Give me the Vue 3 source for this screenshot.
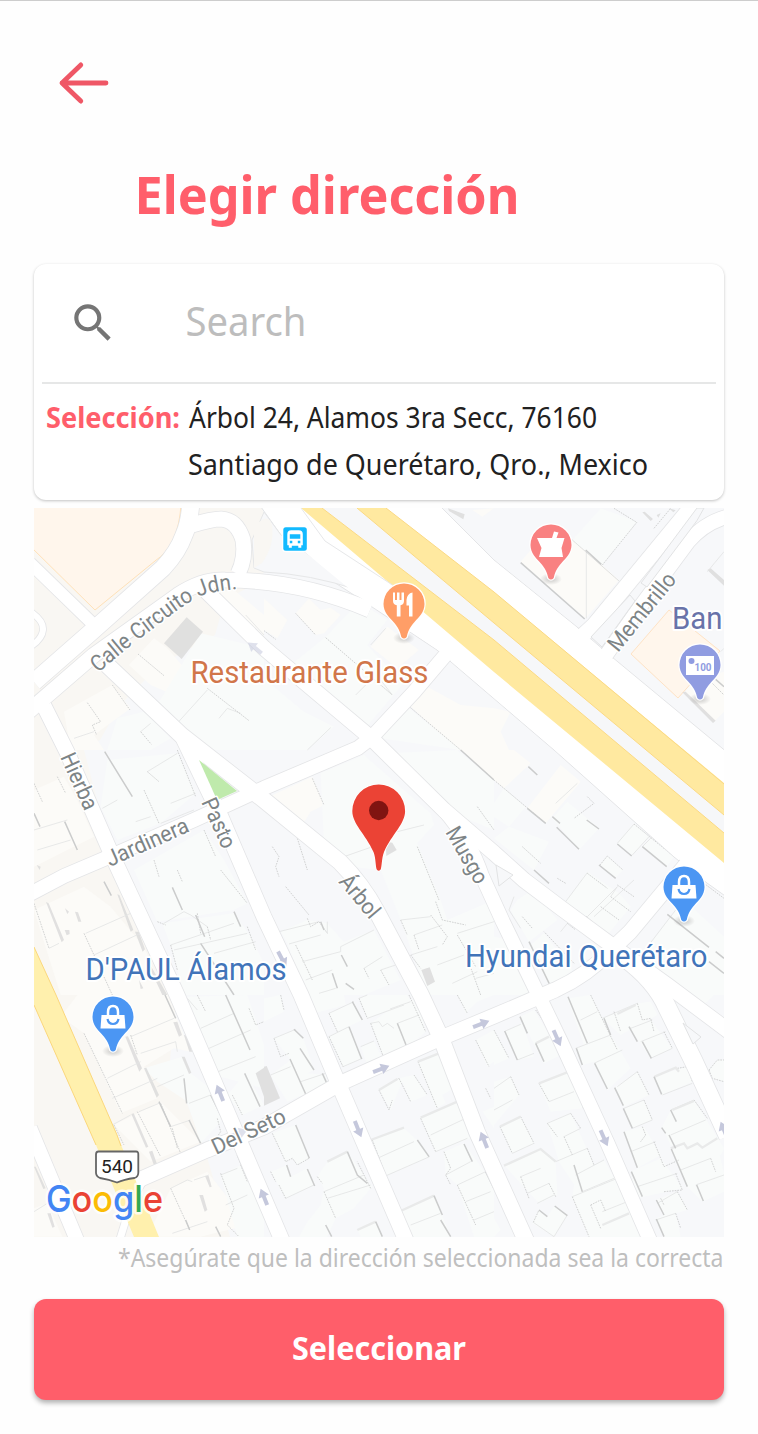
<script setup>
// Street centrelines, with their width in map units
const streets = [
  { d: 'M34 682 L90 633 L163 568 Q178 552 184 535 Q190 522 191 500', w: 17 },
  { d: 'M28 712 L94 655 L178 595 Q202 579 225 580 Q300 580 370 610', w: 15 },
  { d: 'M192 525 Q212 519 221 519 Q237 520 243 540 Q246 558 238 574', w: 15 },
  { d: 'M30 563 L95 626', w: 12 },
  { d: 'M28 610 Q44 620 43 630 Q42 640 28 648', w: 6 },
  { d: 'M44 706 L67 752 L111 853 L177 995 L234 1128 L284 1245', w: 15 },
  { d: 'M104 662 L181 735 L264 800 L340 862 Q362 884 377 912 L421 995 L441 1038 L477 1132 L528 1245', w: 16 },
  { d: 'M183 738 L221 817 L264 917 L301 995 L339 1085 L408 1245', w: 15 },
  { d: 'M28 895 L64 876 L111 856 L194 820 L264 788 L358 748 L371 738 L414 692 L448 652', w: 14 },
  { d: 'M200 585 L264 648 L371 738 L444 810 L494 853 L524 880 L561 908 L614 947 L667 985 L730 1032', w: 15 },
  { d: 'M444 810 Q470 840 482 876 L503 922 L536 990 L561 1042 L607 1142 L652 1245', w: 14 },
  { d: 'M134 1182 L207 1150 L264 1127 L341 1083 L441 1038 L494 1016 L555 990 Q588 975 611 950 L630 932 L690 860', w: 15 },
  { d: 'M625 958 Q655 980 667 1007 L694 1062 L728 1136', w: 18 },
  { d: 'M582 636 L594 625 L627 585 L697 500', w: 15 },
  { d: 'M604 658 L640 607 L688 542 Q705 522 730 516', w: 14 },
  { d: 'M30 1128 L79 1245', w: 14 },
  { d: 'M120 1239 L132 1200 L146 1176', w: 7 }
]

// Building blocks and wall shadows; each tile is drawn at three units per map unit
const tiles = [
  {
    x: 34, y: 505,
    warm: 'M285 480 L360 400 L400 430 L460 500 L420 570 L350 540Z M510 270 L600 255 L690 330 L690 400Z M90 620 L235 540 L290 610 L180 690 L210 735 L110 735Z',
    cool: 'M500 385 L690 430 L690 735 L520 735 L370 600Z M250 640 L330 620 L410 700 L350 735 L220 735Z',
    solid: 'M458 337 L507 380 L443 462 L390 415Z',
    lines: 'M520 555 L425 660 M555 640 L580 610 L620 625 M320 680 L350 655 M120 700 L180 680 M690 390 L635 330',
    dots: 'M510 270 L690 430 M312 447 L390 512 M520 550 L645 647 M235 540 L288 615 M160 593 L200 650 L175 660 L188 690 M320 680 L352 718'
  },
  {
    x: 264, y: 505,
    warm: 'M0 280 L70 345 L40 400 L0 375Z M95 325 L135 280 L170 315 L200 308 L230 330 L180 385 L155 390Z M370 365 L465 435 L400 490 L320 425Z M435 600 L490 545 L590 600 L690 610 L690 735 L580 735Z M625 15 L690 10 L655 35Z',
    cool: 'M80 480 L185 395 L285 290 L370 345 L310 420 L385 500 L440 510 L300 675 L180 575Z M0 520 L120 620 L210 665 L130 735 L0 735Z M350 700 L430 605 L590 735Z',
    solid: 'M552 10 L602 28 L598 43 L555 18Z',
    lines: 'M275 570 L320 525 M350 525 L385 570 M320 420 L365 370 M200 668 L130 735',
    dots: 'M95 325 L155 390 M185 398 L385 570 M180 575 L300 675 M430 600 L590 735 M0 377 L35 403'
  },
  {
    x: 494, y: 505,
    warm: 'M80 170 L115 130 L240 105 L375 225 L275 340Z M0 610 L50 620 L20 680 L45 735 L0 735Z M570 565 L600 525 L690 500 L690 620 L660 650Z',
    cool: 'M235 105 L320 10 L430 50 L325 180Z',
    solid: 'M640 195 L650 190 L690 225 L690 242Z M565 562 L575 560 L665 647 L657 654Z M445 22 L452 20 L477 42 L470 48Z M488 30 L500 25 L493 38Z M525 10 L545 16 L538 22Z',
    lines: 'M277 140 L277 340 M640 200 L690 140 M680 440 L690 430',
    dots: 'M235 105 L375 228 M360 10 L428 52 M325 180 L430 50 M480 70 L530 10 M650 530 L690 570',
    walls: 'M80 173 L272 342 M275 135 L322 178 M665 523 L690 545'
  },
  {
    x: 34, y: 750,
    warm: 'M0 120 L90 80 L130 150 L180 260 L100 300 L0 350Z M0 480 L150 410 L230 470 L330 590 L390 735 L80 735Z',
    cool: 'M220 30 L430 10 L485 130 L380 220 L250 270 L200 170Z M300 360 L510 240 L570 330 L640 460 L600 480 L370 515Z M385 520 L600 490 L650 560 L690 640 L690 735 L450 735 L415 600Z',
    lines: 'M205 175 L250 150 M340 65 L430 10 M410 160 L485 130 M380 220 L480 180 M305 215 L350 200 M390 520 L450 485 L470 495 L520 530 M410 585 L600 520 M45 595 L75 580 M155 550 L290 490 M180 615 L330 545 M420 600 L640 550 M540 610 L665 575 M0 240 L100 210 M10 300 L110 270',
    dots: 'M70 80 L95 130 M0 100 L25 155 M340 65 L375 95 M330 120 L375 220 M430 0 L485 140 M150 550 L235 735 M0 460 L45 595 M360 330 L375 380 M430 360 L445 395 M560 360 L640 460 M370 515 L395 525 M520 530 L530 570 M410 585 L430 660 M490 490 L500 550 M640 530 L665 600 M510 240 L545 320',
    walls: 'M212 5 L295 140 M92 215 L130 300 M210 395 L232 437 M415 412 L445 480 M485 495 L512 560 M600 485 L620 530 M0 190 L18 230 M500 580 L600 735',
    solid: 'M250 433 L256 435 L298 540 L290 545Z M303 545 L314 545 L333 598 L326 605Z M345 650 L352 650 L400 735 L385 735Z M36 456 L44 460 L90 570 L83 577Z M93 475 L105 485 L100 492Z M123 485 L132 487 L142 515 L133 515Z M92 540 L106 540 L107 552 L98 556Z M315 690 L328 715 L320 717Z M8 345 L20 350 L17 360Z'
  },
  {
    x: 264, y: 750,
    warm: 'M15 140 L145 80 L180 165 L140 185 L115 225Z M590 0 L690 0 L690 90Z',
    cool: 'M170 70 L300 15 L500 190 L510 225 L460 280 L530 450 L550 510 L690 450 L690 735 L490 735 L410 510 L350 360 L260 350 L180 280Z M50 545 L130 510 L190 520 L240 575 L330 540 L410 690 L300 735 L125 735 L70 580Z M370 10 L580 0 L690 90 L690 240 L520 170Z',
    solid: 'M365 275 L385 278 L398 300 L367 318Z M472 660 L497 652 L513 695 L490 708Z',
    lines: 'M400 245 L480 225 M240 320 L340 285 M45 545 L165 515 M75 582 L170 555 M115 635 L230 605 L230 590 L330 540 M125 690 L205 660 M300 655 L355 620 M350 660 L395 645 M165 730 L215 715 M410 510 L500 500 M450 555 L535 525 M580 550 L690 515 M440 615 L520 590 M520 645 L600 615 M635 685 L690 670 M190 550 L190 515 M565 700 L640 665',
    dots: 'M145 85 L180 165 M100 265 L130 360 M25 290 L45 320 L35 350 L45 380 M65 410 L135 495 M460 290 L525 450 M410 510 L430 555 M450 555 L465 600 M500 495 L550 560 L535 585 M130 505 L140 530 L165 515 L190 550 M95 585 L145 690 M300 655 L315 685 M350 660 L375 705 M610 625 L650 735 M580 555 L635 650 M440 615 L470 655 M640 170 L690 240 M515 455 L535 510 L605 525',
    walls: 'M170 515 L180 540 M232 615 L250 650 M205 670 L220 715 M365 0 L380 10 M590 0 L690 90 M450 75 L482 105 M245 700 L270 718'
  },
  {
    x: 494, y: 750,
    warm: 'M0 0 L60 0 L110 40 L30 115 L0 90Z M200 45 L260 95 L155 220 L100 175Z',
    cool: 'M30 115 L95 170 L45 230 L0 200 L0 160Z M45 230 L165 275 L120 360 L0 265Z M175 205 L220 155 L315 235 L255 300Z M370 280 L420 220 L465 260 L415 315Z M445 290 L475 260 L540 320 L518 350Z M318 345 L340 318 L387 360 L363 385Z M215 455 L280 365 L375 430 L410 470 L340 555Z M430 630 L570 450 L690 560 L690 735 L560 735Z M0 560 L50 570 L110 735 L0 735Z M105 590 L150 550 L235 660 L170 715Z M70 450 L115 420 L190 510 L105 575 L50 480Z',
    lines: 'M60 440 L45 480 L80 535 M200 545 L220 520 M185 160 L250 100 M280 500 L370 410 M350 440 L370 410 M370 280 L420 222 M415 315 L465 260 M445 290 L475 260 M420 390 L300 500 M545 480 L430 630 M215 455 L280 368',
    dots: 'M0 90 L155 220 M420 222 L543 322 M318 345 L340 318 L387 360 M190 385 L215 400 M85 290 L140 340 M280 140 L300 160 L240 205 M370 405 L420 440 M350 440 L410 485 M320 470 L375 510 M220 520 L245 540 M85 500 L115 535 M280 370 L340 415 M630 400 L690 445 M0 500 L110 730 M240 640 L150 545',
    walls: 'M370 282 L413 318 M445 290 L518 350 M315 345 L365 385 M275 500 L340 556 M175 200 L198 220 M188 232 L255 298 M520 493 L645 592 M120 360 L165 400 M100 175 L155 220 M103 50 L130 75 M430 635 L520 685 M645 635 L690 670 M665 605 L690 625 M105 575 L170 710 M278 210 L315 237 M530 715 L553 735'
  },
  {
    x: 34, y: 995,
    warm: 'M80 65 L130 0 L400 0 L470 170 L420 160 L330 215 L370 310 L260 355 L150 115Z M410 580 L520 530 L575 600 L640 690 L500 725 L340 725Z M240 390 L380 320 L500 440 L350 500Z M0 640 L40 625 L85 725 L0 725Z',
    cool: 'M370 260 L330 220 L445 185 L470 235 L555 300 L560 380 L500 445 L460 320Z M460 5 L640 0 L690 150 L690 280 L540 240Z M580 300 L635 235 L690 330 L625 360Z M560 540 L620 510 L690 640 L690 725 L610 725Z',
    solid: 'M665 235 L690 218 L690 305Z M274 125 L282 124 L324 220 L316 230Z M330 220 L337 218 L375 300 L368 308Z M292 357 L299 355 L343 455 L336 458Z M418 82 L430 80 L444 120 L435 125Z M345 470 L355 467 L370 510 L362 516Z M496 600 L507 600 L520 645 L512 650Z M513 543 L524 543 L533 575 L527 577Z M40 655 L50 655 L62 695 L55 698Z M0 515 L5 515 L35 580 L28 582Z M450 120 L458 122 L475 170 L466 170Z M443 185 L452 185 L472 233 L465 237Z',
    lines: 'M290 125 L420 70 M220 250 L320 200 M235 310 L370 250 M235 390 L290 360 M315 350 L375 325 M410 395 L470 375 M370 275 L450 240 M465 325 L530 300 M320 175 L425 140 L430 170 M500 100 L600 55 M525 160 L650 105 M540 235 L665 185 M490 45 L460 10 M410 580 L460 555 L475 560 M480 555 L525 540 M560 540 L610 520 M575 630 L640 600 M415 715 L520 680 M0 650 L40 625 M540 480 L620 440',
    dots: 'M150 115 L265 355 M310 350 L380 485 M380 325 L440 475 M290 120 L310 180 M490 0 L515 50 M645 40 L665 90 L690 80 M560 535 L600 640 L580 690 L615 725 M410 580 L465 700 M540 440 L560 410 L550 370 M240 390 L270 450 M595 300 L625 360 M620 510 L640 560 M415 400 L430 460',
    walls: 'M393 0 L425 70 M375 320 L410 395 M465 375 L500 445 M450 250 L458 325 M530 300 L565 370 M575 0 L648 165 M632 235 L678 335 M610 480 L640 550 M455 675 L467 705 M545 695 L560 725'
  },
  {
    x: 264, y: 995,
    warm: '',
    cool: 'M0 10 L50 0 L60 50 L0 80Z M135 0 L240 0 L245 30 L150 55Z M195 55 L270 20 L295 75 L220 110Z M285 10 L310 0 L430 0 L440 20 L310 70Z M378 42 L460 10 L485 110 L430 160 L360 190 L320 85Z M195 125 L255 95 L295 190 L237 215Z M290 155 L330 138 L355 190 L310 210Z M30 130 L95 103 L118 130 L150 225 L130 235 L185 240 L190 268 L70 320 L20 240 L80 195Z M462 200 L525 175 L570 280 L535 300 L545 325 L517 340Z M345 285 L405 250 L450 240 L490 300 L440 320 L415 260 L380 345Z M470 370 L580 320 L630 425 L515 470Z M320 435 L420 400 L465 440 L497 485 L360 545Z M25 415 L95 390 L135 490 L100 510 L85 490 L65 500Z M20 530 L70 510 L80 545 L130 520 L150 570 L65 610Z M160 545 L190 500 L250 470 L325 575 L270 640 L215 670 L190 725 L105 725 L130 680 L170 630 L180 580Z M410 650 L510 600 L560 725 L445 725Z M540 470 L600 445 L690 570 L690 725 L630 725 L580 570 L545 540Z M635 135 L690 105 L690 200 L670 215Z M280 705 L335 680 L355 725 L290 725Z M580 0 L690 0 L640 20 L605 55Z M655 350 L690 335 L690 400Z',
    solid: 'M0 215 L8 213 L48 310 L0 332Z',
    lines: 'M30 130 L95 103 M20 240 L80 215 M110 260 L185 235 M195 55 L270 20 M195 125 L255 95 M285 10 L310 0 M310 70 L420 30 M378 42 L440 20 M400 85 L465 60 M320 85 L345 80 L355 95 L370 85 L390 100 M290 155 L330 138 M345 285 L405 250 M500 420 L605 370 M340 490 L450 440 M180 590 L300 540 M190 610 L320 570 M580 570 L665 530 M605 620 L680 590 M630 675 L690 650 M440 690 L530 655 M545 540 L620 500 M65 610 L150 570 M515 470 L610 430 M360 545 L497 485 M237 215 L295 190',
    dots: 'M30 130 L50 185 L75 175 M50 0 L60 45 M135 0 L155 55 M195 125 L237 215 M285 10 L310 70 M345 285 L375 345 L385 315 M405 250 L440 320 M450 240 L490 300 M462 200 L520 340 M525 175 L570 280 M470 370 L515 470 M410 650 L445 725 M635 135 L675 215 M580 570 L635 690 M540 470 L560 520 L545 540 L560 570 M580 0 L610 55 M320 85 L360 190 M195 55 L220 110 M25 415 L65 500 L85 490 L100 510 L135 490 M20 530 L35 560 M45 570 L65 610 M160 545 L175 565 M180 590 L215 670 M435 0 L485 110 M665 280 L680 310 M325 435 L365 540 M320 580 L280 500',
    walls: 'M255 95 L293 192 M78 192 L125 297 M95 390 L136 490 M130 522 L152 573 M68 510 L80 545 M250 470 L280 540 L310 565 M400 85 L430 160 M265 20 L295 75 M90 103 L118 130 M108 160 L150 225 M510 602 L535 660 M580 322 L605 375 M460 435 L495 485 M600 447 L625 500 M185 690 L203 725 M335 680 L355 725 M530 675 L560 725 M175 235 L190 268 M665 530 L690 580',
    roofs: 'M320 435 L420 398 M470 368 L580 320 M410 648 L510 602 M190 500 L250 470 M462 200 L525 175 M280 705 L335 680 M345 285 L400 252'
  },
  {
    x: 494, y: 995,
    warm: '',
    cool: 'M220 10 L290 0 L350 120 L270 150Z M325 70 L430 25 L470 20 L490 60 L380 120Z M245 160 L350 120 L410 220 L340 285 L300 200 L265 210Z M360 280 L430 230 L465 300 L390 335Z M405 95 L470 75 L535 160 L470 190Z M480 245 L580 215 L595 260 L505 300Z M388 340 L450 315 L475 375 L415 400Z M390 410 L450 395 L500 480 L430 520Z M530 345 L600 315 L690 460 L680 480 L530 450 L505 395Z M530 460 L665 430 L690 535 L690 590 L625 620 L580 575Z M410 530 L500 490 L565 580 L430 610Z M485 615 L550 590 L580 645 L510 665Z M485 670 L545 650 L560 725 L510 725Z M32 110 L85 85 L120 185 L70 195Z M78 65 L120 45 L160 110 L200 180 L150 205Z M135 265 L230 230 L265 340 L170 350Z M160 385 L230 355 L300 510 L255 590 L195 500Z M0 260 L50 245 L75 300 L0 390Z M18 395 L80 365 L120 445 L55 475Z M30 510 L140 460 L185 500 L190 600 L135 625Z M245 540 L330 495 L400 620 L440 725 L285 725 L235 605Z M115 685 L135 645 L160 665 L180 635 L220 660 L180 725Z M0 105 L45 190 L0 210Z M645 225 L670 195 L690 195 L690 260 L655 250Z M540 0 L660 0 L610 48Z M0 670 L20 705 L0 725Z',
    lines: 'M260 75 L310 50 M325 70 L430 25 M245 160 L350 120 M300 205 L385 165 M370 275 L430 230 M440 140 L515 110 M410 100 L475 75 M390 340 L450 315 M530 345 L600 315 M410 470 L485 440 M430 575 L550 535 M490 625 L550 590 M485 675 L545 655 M165 320 L240 290 M160 385 L230 355 M210 425 L260 400 M185 500 L280 460 M245 540 L330 495 M80 545 L140 520 M100 595 L165 565 M530 420 L635 375 M560 525 L650 490 M605 570 L690 540 M0 280 L50 245 M0 345 L55 315 M325 650 L400 620 M235 605 L370 550 M130 625 L180 600 M265 590 L360 550 M505 300 L595 265 M470 190 L535 160 M415 400 L475 375 M55 475 L120 445 M70 195 L120 175 M118 682 L180 725 L220 660 M34 108 L80 88',
    dots: 'M290 0 L370 165 M360 50 L380 110 M430 25 L445 75 L470 70 L480 110 M510 110 L535 160 M550 220 L580 215 L595 260 M430 230 L465 300 M450 315 L475 375 M445 395 L455 420 L440 440 M480 440 L510 515 L555 495 M545 535 L565 585 L510 590 M500 610 L510 630 M550 590 L580 645 M545 655 L560 700 M135 265 L165 320 M220 230 L250 290 M210 425 L235 480 M230 355 L260 400 M160 385 L190 425 M280 460 L300 510 M340 495 L400 620 M235 605 L285 725 M0 105 L45 190 M50 245 L75 300 M80 365 L120 445 M18 395 L55 475 M80 545 L105 610 M165 565 L185 605 M645 225 L670 195 L690 195 M645 225 L655 250 L690 260 M290 630 L320 615 L335 650 M125 45 L170 110 M600 315 L640 370 M650 490 L665 530 M235 230 L268 340 M320 700 L290 630 M118 682 L135 645',
    walls: 'M222 5 L280 145 M247 160 L265 210 M32 108 L70 195 M78 65 L100 115 M125 145 L150 200 M302 205 L340 282 M362 278 L388 332 M405 95 L430 140 M445 140 L472 190 M480 245 L503 298 M388 340 L415 400 M390 410 L430 518 M530 345 L547 380 M503 398 L515 415 M525 420 L545 460 M532 462 L580 575 M608 570 L628 618 M412 530 L445 605 M487 615 L510 660 M487 672 L510 725 M330 70 L350 120 M550 0 L612 48 M665 280 L690 345 M240 510 L265 590 M135 645 L160 665 M182 633 L220 662',
    roofs: 'M135 265 L225 230 M30 512 L140 462 L185 500 M325 690 L405 655 M530 460 L570 445 L580 460 L610 445 L625 458 L670 430 M18 395 L80 365 M370 57 L425 30 M535 345 L600 318 M125 145 L165 125 M482 245 L545 218 L555 230'
  }
]

const arrows = [
  [381, 1069, -21], [481, 1024, -21], [358, 1129, 68], [484, 1140, -112], [557, 1038, 66],
  [604, 1138, 66], [220, 1093, -112], [264, 1197, -112], [282, 959, 62], [255, 648, -142],
  [724, 1130, -112], [239, 1133, -20]
]

const streetNames = [
  { t: 'Hierba', x: 60, y: 757, a: 65.5, l: 60 },
  { t: 'Pasto', x: 201, y: 802, a: 65.5, l: 53 },
  { t: 'Jardinera', x: 110, y: 867, a: -24, l: 88 },
  { t: 'Árbol', x: 338, y: 882, a: 50, l: 50 },
  { t: 'Musgo', x: 445, y: 832, a: 60, l: 62 },
  { t: 'Membrillo', x: 618, y: 653, a: -51, l: 94 },
  { t: 'Del Seto', x: 216, y: 1155, a: -25, l: 79 }
]

const pins = [
  { x: 404, y: 604, c: '#ff9e67', kind: 'food' },
  { x: 551, y: 545, c: '#f98181', kind: 'pharmacy' },
  { x: 700, y: 665, c: '#909ce1', kind: 'money' },
  { x: 684, y: 887, c: '#4b96f3', kind: 'bag' },
  { x: 113, y: 1017, c: '#4b96f3', kind: 'bag' }
]
</script>

<template>
  <main class="screen">
    <button class="back" aria-label="Regresar">
      <svg width="52" height="44" viewBox="0 0 52 44">
        <path d="M22.800 3.900 L4 22 L22.800 40.100 M4 22 H48" />
      </svg>
    </button>

    <h1 class="title">
      <svg width="400" height="70"><text x="-1.500" y="50" textLength="385" lengthAdjust="spacingAndGlyphs">Elegir dirección</text></svg>
    </h1>

    <section class="card">
      <div class="search">
        <svg class="glass" width="50" height="50" viewBox="0 0 24 24">
          <path d="M15.500 14h-.790l-.280-.270A6.470 6.470 0 0 0 16 9.500A6.500 6.500 0 1 0 9.500 16c1.610 0 3.090-.590 4.230-1.570l.270.280v.790l5 4.990L20.490 19l-4.990-5zm-6 0C7.010 14 5 11.990 5 9.500S7.010 5 9.500 5 14 7.010 14 9.500 11.990 14 9.500 14z" />
        </svg>
        <svg class="placeholder" width="130" height="56"><text x="-.500" y="41" textLength="121" lengthAdjust="spacingAndGlyphs">Search</text></svg>
      </div>
      <div class="selection">
        <svg class="caption" width="143" height="94"><text x="0" y="36" textLength="134" lengthAdjust="spacingAndGlyphs">Selección:</text></svg>
        <svg class="address" width="480" height="94">
          <text x="0" y="36" textLength="408" lengthAdjust="spacingAndGlyphs">Árbol 24, Alamos 3ra Secc, 76160</text>
          <text x="-1" y="83" textLength="460" lengthAdjust="spacingAndGlyphs">Santiago de Querétaro, Qro., Mexico</text>
        </svg>
      </div>
    </section>

    <svg class="map" width="690" height="729" viewBox="34 508 690 729">
      <defs>
        <path id="circuito" d="M98 673 L134 643 L167 618 Q188 602 201 596 Q215 590 250 588" />
        <path id="pin" d="M-20.500 0 A20.500 20.500 0 1 1 20.500 0 C20.500 8 15 13 10.500 18 C5.500 24 4 27 2.700 33 Q0 36 -2.700 33 C-4 27 -5.500 24 -10.500 18 C-15 13 -20.500 8 -20.500 0Z" />
        <radialGradient id="shade"><stop offset="0" stop-color="#777" stop-opacity=".4" /><stop offset="1" stop-color="#777" stop-opacity="0" /></radialGradient>
      </defs>
      <rect x="34" y="508" width="690" height="729" fill="#f7f8fa" />
      <path fill="#f9f7f3" d="M34 508H262L272 535L262 580L225 600L215 635L160 665L120 705L100 740L84 750L111 853L140 920L175 1010L170 1060L205 1150L230 1237H34Z" />
      <path d="M30 504H181Q179 545 155 561L95 610L30 546Z" fill="#fff6ec" stroke="#ffe1b8" />
      <path d="M669 610L720 651L678 698L631 654Z" fill="#fff6ec" stroke="#ffe3c5" />

      <g v-for="t in tiles" :key="t.x + '-' + t.y" :transform="`translate(${t.x} ${t.y}) scale(.33333)`">
        <path :d="t.warm" fill="#fcfbf8" />
        <path :d="t.cool" class="block" />
        <path v-if="t.solid" :d="t.solid" fill="#d9d9d9" opacity=".8" />
        <path :d="t.lines" class="edge" />
        <path :d="t.dots" class="dots" />
        <path v-if="t.roofs" :d="t.roofs" class="roof" />
        <path v-if="t.walls" :d="t.walls" class="wall" />
      </g>

      <path d="M256 500H434L494 560L577 627L612 657L728 753V898L707 883L674 857L554 750L437 650L357 597L300 560L281 535Z" fill="#fff" stroke="#e4e5e7" />
      <path d="M264 512L281 535L358 590Q310 574 264 572L254 568L252 540Z" fill="#f7f8fa" stroke="#e6e7e8" />
      <path d="M254 527Q268 511 272 525Q275 545 262 563L254 568Z" fill="#f9f7f3" />
      <g fill="none" stroke="#e4e5e7">
        <path v-for="(s, i) in streets" :key="i" :d="s.d" :stroke-width="s.w + 1.6" />
      </g>
      <g fill="none" stroke="#fff" stroke-linejoin="round">
        <path v-for="(s, i) in streets" :key="i" :d="s.d" :stroke-width="s.w" />
      </g>
      <path d="M260 500H426L434 509L493 560L576 627L612 658L724 751V894L708 882L675 856L555 750L438 650L358 596L300 548L282 534Z" fill="#fff" />
      <path d="M322 508H357L494 623L724 815V833L494 640Z" fill="#f6f7f9" />
      <path d="M301 508H322L494 640L724 833V863L494 672Z M357 508H386L494 592L724 783V815L494 623Z" fill="#ffe9a0" />
      <path d="M322 508L494 640L724 833M357 508L494 623L724 815M386 508L494 592L724 784" fill="none" stroke="#fbd984" />
      <path d="M301 508L325 541L394 586" fill="none" stroke="#e6e7e9" />
      <path d="M591 637L630 595L635 601L602 647Z M641 583L697 508H704Q697 522 690 530L647 587Z" fill="#f7f8fa" stroke="#e2e3e4" />
      <path d="M34 947L56 995L117 1135L159 1237H134L96 1145L34 1005Z" fill="#fff0ad" />
      <path d="M34 947L56 995L117 1135L121 1146M34 1005L96 1145" fill="none" stroke="#fbd77c" />
      <path d="M199 760L237 791L217 800Z" fill="#bfeaac" />
      <path d="M683 1023L701 1037L693 1044Z" fill="#f7f8fa" stroke="#e2e3e4" />
      <path d="M496 865L513 875L499 886Z" fill="#f7f8fa" stroke="#e2e3e4" />

      <path
        v-for="(a, i) in arrows" :key="'a' + i"
        :transform="`translate(${a[0]} ${a[1]}) rotate(${a[2]})`"
        d="M-8.500 -2H0.500V-5.500L9 0L0.500 5.500V2H-8.500Z" fill="#c5c8dc" :opacity="i === 9 || i === 11 ? .55 : 1"
      />

      <g class="street">
        <text
          v-for="s in streetNames" :key="s.t" :textLength="s.l" lengthAdjust="spacingAndGlyphs"
          :transform="`translate(${s.x} ${s.y}) rotate(${s.a})`"
        >{{ s.t }}</text>
        <text><textPath href="#circuito" textLength="166" lengthAdjust="spacingAndGlyphs">Calle Circuito Jdn.</textPath></text>
      </g>

      <g class="place">
        <text x="190.500" y="683" textLength="238" lengthAdjust="spacingAndGlyphs" fill="#d1764a">Restaurante Glass</text>
        <text x="672" y="629" textLength="50.500" lengthAdjust="spacingAndGlyphs" fill="#6973a9">Ban</text>
        <text x="85.500" y="980" textLength="201" lengthAdjust="spacingAndGlyphs" fill="#4174b9">D'PAUL Álamos</text>
        <text x="465" y="966.500" textLength="242.500" lengthAdjust="spacingAndGlyphs" fill="#4174b9">Hyundai Querétaro</text>
      </g>

      <g transform="translate(283.300 527.300)">
        <rect x="-1.500" y="-1.500" width="26.500" height="26.500" rx="4" fill="#fff" />
        <rect width="23.500" height="23.500" rx="2.500" fill="#12baff" />
        <path d="M4 7Q4 3 8 3H15.500Q19.500 3 19.500 7V18H18V20.500H15V18.500H8.500V20.500H5.500V18H4Z" fill="#fff" />
        <path d="M6.500 7H17V11.500H6.500Z M6.500 13.500H9V16H6.500Z M14.500 13.500H17V16H14.500Z" fill="#12baff" />
      </g>

      <g v-for="p in pins" :key="p.x" :transform="`translate(${p.x} ${p.y})`">
        <ellipse cx="0" cy="34" rx="11" ry="6" fill="url(#shade)" />
        <use href="#pin" fill="#fff" stroke="#fff" stroke-width="2.500" />
        <use href="#pin" :fill="p.c" />
        <g v-if="p.kind === 'food'" fill="#fff">
          <path d="M-11 -11.500H-9V-4H-7V-11.500H-4.500V-4H-2.500V-11.500H0V-3Q-.200 .800 -3.500 1.200V12.500H-7.200V1.200Q-10.800 .800 -11 -3Z M8.500 -11.500V12.500H5V1.500H2.500V-4Q3 -10.500 8.500 -11.500Z" />
        </g>
        <g v-else-if="p.kind === 'pharmacy'" fill="#fff">
          <path d="M-14 -7H1L3 -13.500L7.500 -12.500L5.500 -7H13.500L10.500 3L12 12H-12L-9.500 3Z" />
        </g>
        <g v-else-if="p.kind === 'money'">
          <rect x="-14" y="-9" width="28" height="19" fill="#fff" />
          <circle cx="-8.500" cy="-4" r="3" fill="#909ce1" />
          <text x="-5.500" y="6" textLength="17" lengthAdjust="spacingAndGlyphs" class="hundred">100</text>
        </g>
        <g v-else>
          <path d="M-11.500 -2H11.500L12.500 11.500H-12.500Z" fill="#fff" />
          <path d="M-5 -2V-5Q-5 -11 0 -11Q5 -11 5 -5V-2" fill="none" stroke="#fff" stroke-width="2.500" />
          <path d="M-5.500 2Q-4.500 7 0 7Q4.500 7 5.500 2" fill="none" stroke="#4b96f3" stroke-width="2.200" />
        </g>
      </g>

      <path d="M352.300 811A26.400 26.400 0 0 1 405.100 811C405.100 824 392 834 384 852C381.500 858 382 868 380.300 870Q378.700 871.300 377.100 870C375.400 868 376 858 373.500 852C365.500 834 352.300 824 352.300 811Z" fill="#eb4335" stroke="#fff" stroke-width="1.500" paint-order="stroke" />
      <circle cx="378.700" cy="810.500" r="9.700" fill="#801411" />

      <path d="M98.500 1151.500H136Q138.500 1151.500 138.300 1154.500V1173Q138 1177 134.500 1178Q124 1179.500 117 1182.500Q109 1179.500 100 1178Q96.300 1176.500 96 1173V1154.500Q96 1151.500 98.500 1151.500Z" fill="#fff" stroke="#666" stroke-width="1.800" />
      <text x="101" y="1172.500" textLength="32" lengthAdjust="spacingAndGlyphs" class="route">540</text>
      <text x="46" y="1211.500" textLength="117" lengthAdjust="spacingAndGlyphs" class="brand"><tspan fill="#4285f4">G</tspan><tspan fill="#ea4335">o</tspan><tspan fill="#fbbc05">o</tspan><tspan fill="#4285f4">g</tspan><tspan fill="#34a853">l</tspan><tspan fill="#ea4335">e</tspan></text>
    </svg>

    <p class="note">
      <svg width="607" height="44"><text x="1" y="30" textLength="605.500" lengthAdjust="spacingAndGlyphs">*Asegúrate que la dirección seleccionada sea la correcta</text></svg>
    </p>
    <button class="submit">
      <svg width="178" height="60"><text x="2" y="39.500" textLength="174" lengthAdjust="spacingAndGlyphs">Seleccionar</text></svg>
    </button>
  </main>
</template>

<style>
body { background: #fefefe; }
</style>

<style scoped>
.screen {
  box-sizing: border-box;
  width: 758px;
  height: 1434px;
  padding: 60px 34px 0;
  border-top: 1px solid #cdcdcd;
  background: #fefefe;
  font-family: "Noto Sans", "Open Sans", sans-serif;
  overflow: hidden;
}
svg { display: block; flex: none; }
button { border: 0; padding: 0; background: none; font: inherit; }
.back { display: block; margin-left: 24px; }
.back path { fill: none; stroke: #ef5766; stroke-width: 4.8; stroke-linecap: round; stroke-linejoin: round; }
.title { margin: 59px 0 0 102px; height: 70px; font-size: 51px; }
.title svg { overflow: visible; }
.title text { fill: #ff5e6b; font-weight: 700; font-size: 52px; }
.card {
  height: 236px;
  margin-top: 30px;
  border-radius: 12px;
  background: #fff;
  box-shadow: 0 1px 3px rgba(0, 0, 0, .24);
}
.search {
  display: flex;
  align-items: center;
  height: 118px;
  margin: 0 8px;
  padding-left: 26px;
  border-bottom: 2px solid #e6e7e7;
}
.glass { fill: #757575; }
.placeholder { margin-left: 68px; overflow: visible; }
.placeholder text { font-size: 40px; fill: #bdbdbd; }
.selection { display: flex; height: 116px; padding: 8px 0 0 12px; box-sizing: border-box; }
.selection svg { overflow: visible; }
.caption text { fill: #ff5e6b; font-weight: 700; font-size: 28.5px; }
.address text { fill: #212121; font-size: 28.5px; }
.map { margin-top: 8px; }
.block { fill: #f9fbfa; }
.edge { fill: none; stroke: #e3e5e5; stroke-width: 2.5; }
.dots { fill: none; stroke: #cecfcf; stroke-width: 2.8; stroke-dasharray: 5 3; }
.wall { fill: none; stroke: #cbcccc; stroke-width: 4.5; }
.roof { fill: none; stroke: #e9eaea; stroke-width: 7; }
.street text, .place text { font-family: Roboto, sans-serif; paint-order: stroke; stroke: #fff; stroke-linejoin: round; }
.street text { fill: #7d8486; font-size: 22.5px; stroke-width: 3px; }
.place text { font-size: 31px; stroke-width: 4px; }
.hundred { font-family: Roboto, sans-serif; font-size: 11.5px; font-weight: 700; fill: #909ce1; }
.route { font-family: Roboto, sans-serif; font-size: 19px; fill: #222; }
.brand { font-family: Inter, Roboto, sans-serif; font-size: 37px; font-weight: 500; paint-order: stroke; stroke: #fff; stroke-opacity: .75; stroke-width: 5px; stroke-linejoin: round; }
.note { display: flex; justify-content: flex-end; margin: 0; height: 62px; }
.note svg { overflow: visible; }
.note text { fill: #bfbfbf; font-size: 24.5px; }
.submit {
  display: flex;
  align-items: center;
  justify-content: center;
  width: 690px;
  height: 101px;
  border-radius: 12px;
  background: #ff5e6a;
  box-shadow: 0 3px 5px rgba(0, 0, 0, .3);
}
.submit text { fill: #fff; font-weight: 700; font-size: 31.5px; }
</style>
